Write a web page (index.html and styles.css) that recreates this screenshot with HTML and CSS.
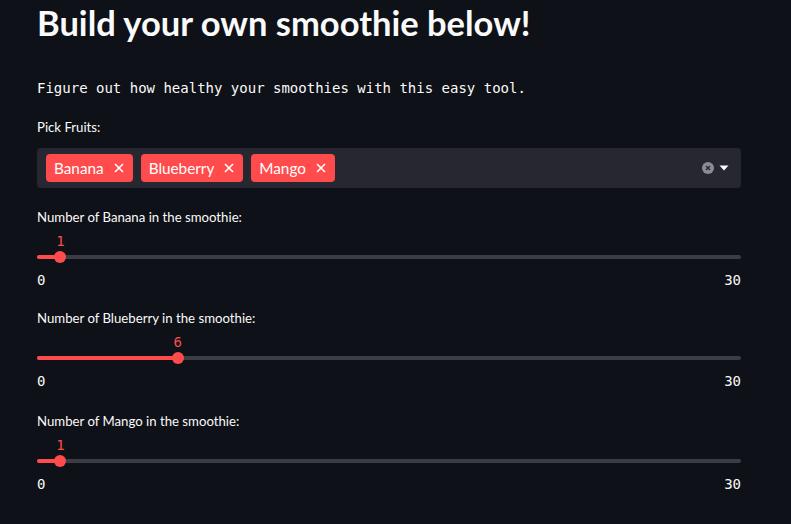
FILE: index.html
```html
<!DOCTYPE html>
<html>
<head>
<meta charset="utf-8">
<link rel="stylesheet" href="styles.css">
</head>
<body>
<main class="app">
  <h1 class="title">Build your own smoothie below!</h1>
  <p class="intro">Figure out how healthy your smoothies with this easy tool.</p>

  <div class="field">
    <label class="label">Pick Fruits:</label>
    <div class="select">
      <div class="tags">
        <span class="tag">Banana <svg class="x" width="10" height="10" viewBox="0 0 10 10"><path d="M1 1 L9 9 M9 1 L1 9" stroke="#fff" stroke-width="1.6"/></svg></span>
        <span class="tag">Blueberry <svg class="x" width="10" height="10" viewBox="0 0 10 10"><path d="M1 1 L9 9 M9 1 L1 9" stroke="#fff" stroke-width="1.6"/></svg></span>
        <span class="tag">Mango <svg class="x" width="10" height="10" viewBox="0 0 10 10"><path d="M1 1 L9 9 M9 1 L1 9" stroke="#fff" stroke-width="1.6"/></svg></span>
      </div>
      <div class="controls">
        <svg class="clear" width="12" height="12" viewBox="0 0 12 12"><circle cx="6" cy="6" r="6" fill="#8b8d96"/><path d="M4 4 L8 8 M8 4 L4 8" stroke="#262730" stroke-width="1.4"/></svg>
        <svg class="caret" width="10" height="6" viewBox="0 0 10 6"><path d="M0.5 0.5 H9.5 L5 5.5 Z" fill="#fafafa"/></svg>
      </div>
    </div>
  </div>

  <div class="slider">
    <label class="label">Number of Banana in the smoothie:</label>
    <div class="track-area">
      <div class="track">
        <div class="fill" style="width:3.333%"></div>
        <div class="thumb" style="left:3.333%"><span class="value">1</span></div>
      </div>
    </div>
    <div class="range"><span>0</span><span>30</span></div>
  </div>

  <div class="slider">
    <label class="label">Number of Blueberry in the smoothie:</label>
    <div class="track-area">
      <div class="track">
        <div class="fill" style="width:20%"></div>
        <div class="thumb" style="left:20%"><span class="value">6</span></div>
      </div>
    </div>
    <div class="range"><span>0</span><span>30</span></div>
  </div>

  <div class="slider">
    <label class="label">Number of Mango in the smoothie:</label>
    <div class="track-area">
      <div class="track">
        <div class="fill" style="width:3.333%"></div>
        <div class="thumb" style="left:3.333%"><span class="value">1</span></div>
      </div>
    </div>
    <div class="range"><span>0</span><span>30</span></div>
  </div>
</main>
</body>
</html>
```

FILE: styles.css
```css
html, body {
  margin: 0;
  padding: 0;
  background: #0e1117;
  color: #fafafa;
  font-family: Lato, "Noto Sans", sans-serif;
  overflow: hidden;
}
.app {
  width: 704px;
  margin-left: 37px;
  display: flex;
  flex-direction: column;
}
.title {
  margin: 0;
  font-size: 34.5px;
  font-weight: 700;
  line-height: 46px;
}
.intro {
  margin: 33px 0 0 0;
  font-family: "DejaVu Sans Mono", monospace;
  font-size: 14px;
  line-height: 18px;
}
.field {
  margin-top: 21px;
  display: flex;
  flex-direction: column;
}
.label {
  font-size: 13.2px;
  line-height: 18px;
  display: block;
}
.select {
  margin-top: 12px;
  height: 40px;
  background: #262730;
  border-radius: 4px;
  display: flex;
  align-items: center;
  justify-content: space-between;
  padding: 0 12px 0 9px;
}
.tags {
  display: flex;
  gap: 8px;
}
.tag {
  background: #ff4b4b;
  color: #fff;
  border-radius: 4px;
  height: 28px;
  display: flex;
  align-items: center;
  padding: 0 9px 0 8px;
  font-size: 15.3px;
  gap: 10px;
}
.controls {
  display: flex;
  align-items: center;
  gap: 5px;
}
.slider {
  margin-top: 20px;
  display: flex;
  flex-direction: column;
}
.slider:last-child {
  margin-top: 22px;
}
.track-area {
  height: 41px;
  display: flex;
  align-items: flex-end;
  padding-bottom: 8px;
  box-sizing: border-box;
}
.track {
  position: relative;
  width: 100%;
  height: 4px;
  background: #3b3d45;
  border-radius: 2px;
}
.fill {
  height: 100%;
  background: #ff4b4b;
  border-radius: 2px;
}
.thumb {
  position: absolute;
  top: 50%;
  width: 12px;
  height: 12px;
  margin-left: -6px;
  margin-top: -6px;
  border-radius: 50%;
  background: #ff4b4b;
}
.value {
  position: absolute;
  bottom: 13px;
  left: 50%;
  transform: translateX(-50%);
  color: #ff4b4b;
  font-family: "DejaVu Sans Mono", monospace;
  font-size: 14px;
  line-height: 18px;
}
.range {
  display: flex;
  justify-content: space-between;
  font-family: "DejaVu Sans Mono", monospace;
  font-size: 14px;
  line-height: 18px;
  margin-top: 4px;
}
```
